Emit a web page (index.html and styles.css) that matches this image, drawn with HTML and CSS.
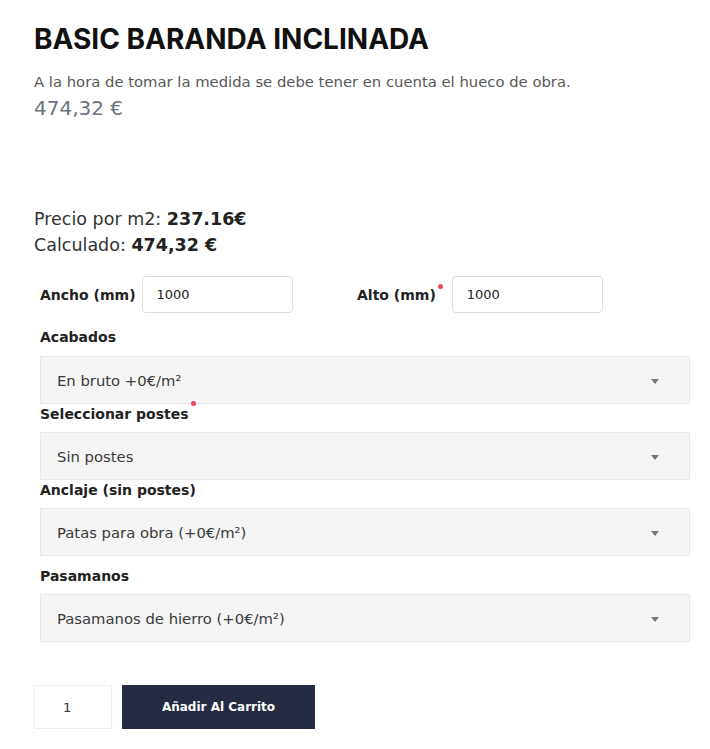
FILE: index.html
```html
<!DOCTYPE html>
<html lang="es">
<head>
    <meta charset="UTF-8">
    <meta name="viewport" content="width=device-width, initial-scale=1.0">
    <title>Basic Baranda Inclinada</title>
    <link rel="stylesheet" href="styles.css">
</head>
<body>
    <div class="product">
        <h1 class="title">BASIC BARANDA INCLINADA</h1>
        <p class="desc">A la hora de tomar la medida se debe tener en cuenta el hueco de obra.</p>
        <p class="price">474,32 €</p>

        <div class="calc">
            <p>Precio por m2: <b>237.16€</b></p>
            <p>Calculado: <b>474,32 €</b></p>
        </div>

        <div class="sizes">
            <div class="size">
                <label>Ancho (mm)</label>
                <input class="num" type="text" value="1000">
            </div>
            <div class="size">
                <label class="req">Alto (mm)</label>
                <input class="num" type="text" value="1000">
            </div>
        </div>

        <div class="field first">
            <label>Acabados</label>
            <div class="select">En bruto +0€/m²<span class="arrow"></span></div>
        </div>
        <div class="field">
            <label class="req">Seleccionar postes</label>
            <div class="select">Sin postes<span class="arrow"></span></div>
        </div>
        <div class="field">
            <label>Anclaje (sin postes)</label>
            <div class="select">Patas para obra (+0€/m²)<span class="arrow"></span></div>
        </div>
        <div class="field spaced">
            <label>Pasamanos</label>
            <div class="select">Pasamanos de hierro (+0€/m²)<span class="arrow"></span></div>
        </div>

        <div class="cart">
            <input class="qty" type="text" value="1">
            <button class="add">Añadir Al Carrito</button>
        </div>
    </div>
</body>
</html>
```

FILE: styles.css
```css
body {
    margin: 0;
    font-family: "DejaVu Sans", sans-serif;
    color: #333;
    background: #fff;
}
p {
    margin: 0;
}
.product {
    padding: 22px 20px 0 34px;
}
.title {
    font-family: Inter, sans-serif;
    font-size: 28px;
    font-weight: 700;
    color: #111;
    margin: 0 0 16px;
    line-height: 34px;
}
.desc {
    font-size: 14.8px;
    color: #585858;
    line-height: 20px;
}
.price {
    font-size: 20px;
    color: #6b7280;
    line-height: 28px;
    margin-top: 2px;
}
.calc {
    margin-top: 84px;
    font-size: 17.5px;
    line-height: 26px;
    color: #333;
}
.calc b {
    color: #222;
}
.sizes {
    display: flex;
    padding-left: 6px;
    margin-top: 18px;
}
.size {
    display: flex;
    align-items: center;
    width: 317px;
}
label {
    font-size: 14px;
    font-weight: 700;
    color: #222;
}
.req {
    position: relative;
}
.req::after {
    content: "";
    position: absolute;
    right: -7px;
    top: -3px;
    width: 5px;
    height: 5px;
    border-radius: 50%;
    background: #e84a5f;
}
.size label {
    margin-right: 6px;
}
.size .req {
    margin-right: 16px;
}
.num {
    width: 151px;
    height: 37px;
    box-sizing: border-box;
    border: 1px solid #ddd;
    border-radius: 4px;
    padding: 0 14px;
    font-family: inherit;
    font-size: 13px;
    color: #222;
}
.field {
    margin-left: 6px;
}
.field label {
    display: inline-block;
    line-height: 20px;
    margin-bottom: 8px;
}
.first {
    margin-top: 14px;
}
.first label {
    margin-bottom: 9px;
}
.spaced {
    margin-top: 10px;
}
.select {
    position: relative;
    height: 48px;
    box-sizing: border-box;
    width: 650px;
    background: #f5f5f5;
    border: 1px solid #e8e8e8;
    padding: 0 16px;
    display: flex;
    align-items: center;
    font-size: 14.8px;
    color: #3a3a3a;
}
.arrow {
    position: absolute;
    right: 30px;
    top: 22px;
    border-left: 4px solid transparent;
    border-right: 4px solid transparent;
    border-top: 5px solid #777;
}
.cart {
    display: flex;
    gap: 10px;
    margin-top: 43px;
}
.qty {
    width: 78px;
    height: 44px;
    box-sizing: border-box;
    border: 1px solid #eee;
    padding: 0 28px;
    font-family: inherit;
    font-size: 13px;
    color: #333;
}
.add {
    width: 193px;
    height: 44px;
    border: 0;
    background: #252b42;
    color: #fff;
    font-family: inherit;
    font-size: 12px;
    font-weight: 700;
}
```
